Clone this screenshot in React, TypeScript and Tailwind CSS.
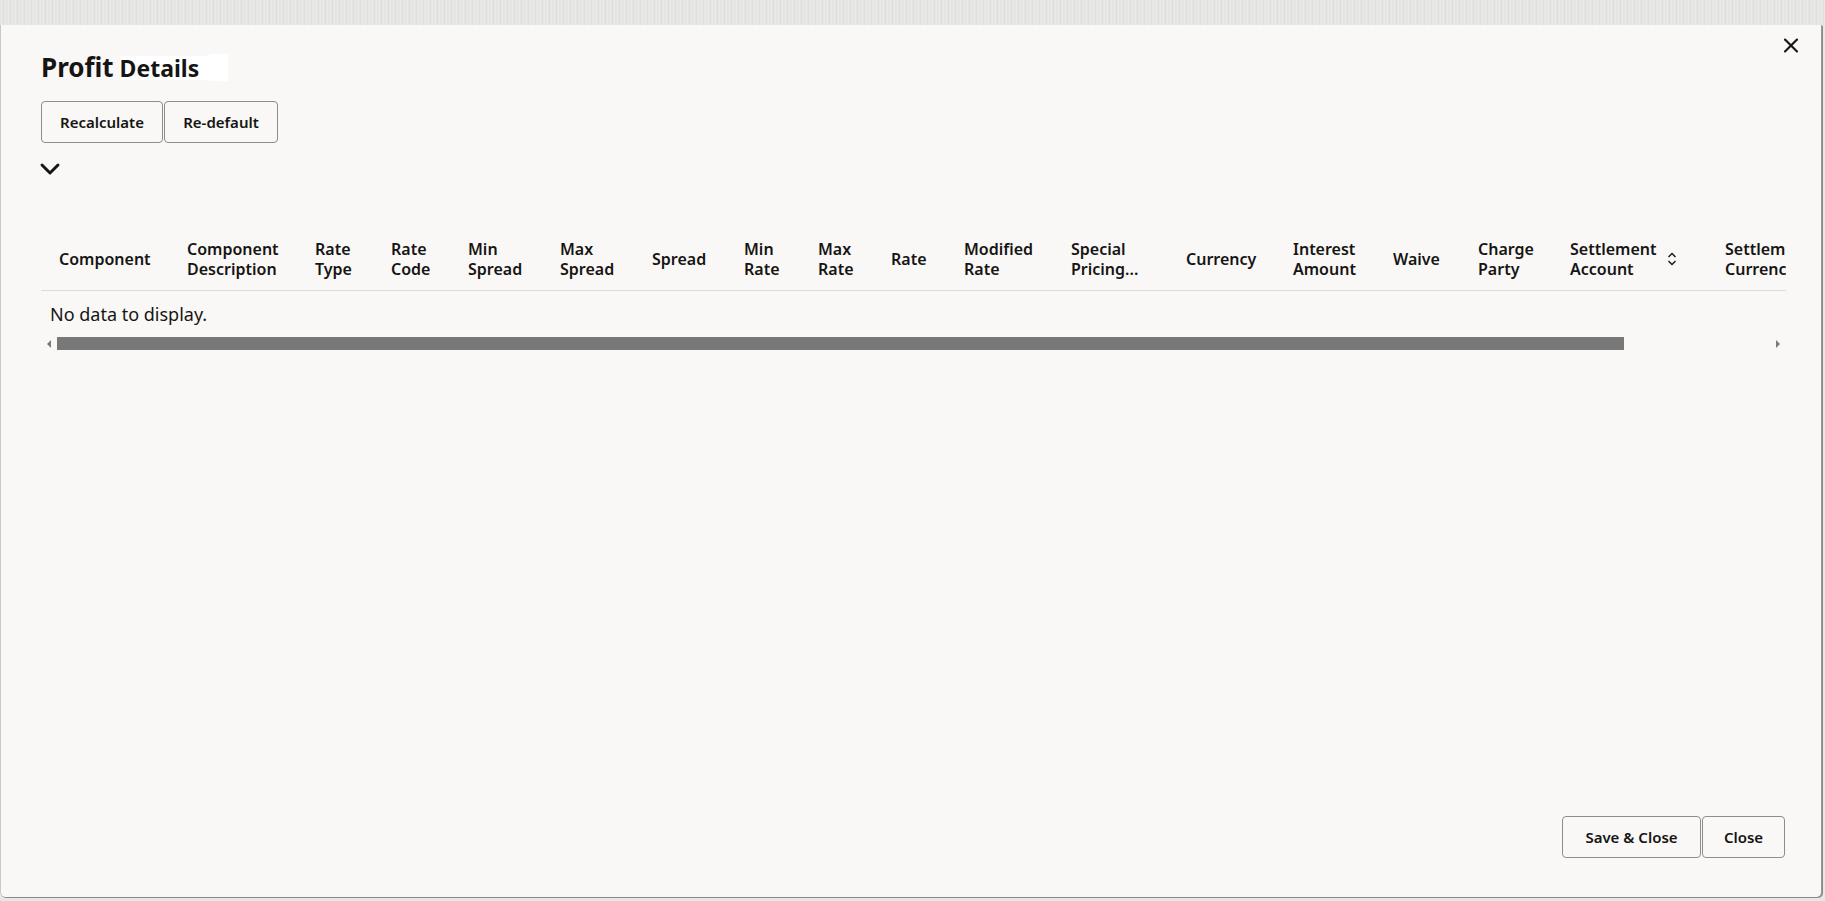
import { X, ChevronDown } from 'lucide-react'

const columns: { lines: string[]; w: string; sort?: boolean }[] = [
  { lines: ['Component'], w: 'w-[128px]' },
  { lines: ['Component', 'Description'], w: 'w-[128px]' },
  { lines: ['Rate', 'Type'], w: 'w-[76px]' },
  { lines: ['Rate', 'Code'], w: 'w-[77px]' },
  { lines: ['Min', 'Spread'], w: 'w-[92px]' },
  { lines: ['Max', 'Spread'], w: 'w-[92px]' },
  { lines: ['Spread'], w: 'w-[92px]' },
  { lines: ['Min', 'Rate'], w: 'w-[74px]' },
  { lines: ['Max', 'Rate'], w: 'w-[73px]' },
  { lines: ['Rate'], w: 'w-[73px]' },
  { lines: ['Modified', 'Rate'], w: 'w-[107px]' },
  { lines: ['Special', 'Pricing...'], w: 'w-[115px]' },
  { lines: ['Currency'], w: 'w-[107px]' },
  { lines: ['Interest', 'Amount'], w: 'w-[100px]' },
  { lines: ['Waive'], w: 'w-[85px]' },
  { lines: ['Charge', 'Party'], w: 'w-[92px]' },
  { lines: ['Settlement', 'Account'], w: 'w-[155px]', sort: true },
  { lines: ['Settlement', 'Currency'], w: 'w-[130px]' },
]

function SortIcon() {
  return (
    <svg width="10" height="14" viewBox="0 0 10 14" className="ml-[11px] shrink-0">
      <path d="M1.5 5 L5 1.5 L8.5 5" fill="none" stroke="#161513" strokeWidth="1.4" />
      <path d="M1.5 9 L5 12.5 L8.5 9" fill="none" stroke="#161513" strokeWidth="1.4" />
    </svg>
  )
}

export default function App() {
  return (
    <div
      className="w-[1825px] h-[901px] bg-[#e7e7e6] text-[#161513] overflow-hidden flex flex-col"
      style={{ fontFamily: '"Noto Sans", "Open Sans", sans-serif' }}
    >
      <div className="h-[25px] shrink-0 bg-[repeating-linear-gradient(90deg,#e0e0df_0px,#efefee_2px,#dadada_3px,#ebebea_5px,#e3e3e2_7px)]" />

      {/* Dialog */}
      <div className="w-[1822px] h-[872px] bg-[#f9f8f7] border-l border-[#c9c9c9] border-r border-r-[#9a9a9a] rounded-b-[5px] shadow-[1px_1px_0_#8a8a8a] flex flex-col pl-[40px] pr-[36px] pt-[26px] pb-[39px] relative">
        <button className="absolute right-[18px] top-[8px] w-[24px] h-[24px] flex items-center justify-center">
          <X size={25} strokeWidth={2.1} color="#161513" />
        </button>

        {/* Title */}
        <div className="flex items-center h-[32px]">
          <span className="text-[26px] font-bold leading-[32px]">Profit</span>
          <span className="text-[23px] font-bold leading-[24px] bg-white ml-[6px] pr-[10px] mt-[2px]">Details</span>
          <span className="w-[19px] h-[27px] bg-white" />
        </div>

        {/* Actions */}
        <div className="flex mt-[18px]">
          <button className="h-[42px] w-[122px] border border-[#8f8d8b] rounded-[4px] text-[15px] font-semibold bg-[#f9f8f7]">
            Recalculate
          </button>
          <button className="h-[42px] w-[114px] ml-[1px] border border-[#8f8d8b] rounded-[4px] text-[15px] font-semibold bg-[#f9f8f7]">
            Re-default
          </button>
        </div>

        <div className="mt-[17px] h-[18px] w-[18px] flex items-center justify-center overflow-visible">
          <ChevronDown size={32} strokeWidth={2.2} color="#161513" className="shrink-0" />
        </div>

        {/* Table */}
        <div className="mt-[48px] w-[1745px] overflow-hidden">
          <div className="flex h-[65px] items-center pt-[1px] border-b border-[#dedcda] w-[1745px]">
            {columns.map((c, i) => (
              <div key={i} className={`${c.w} shrink-0 pl-[18px] flex items-center`}>
                <div className="text-[16px] font-semibold leading-[20px] whitespace-nowrap">
                  {c.lines.map((l, j) => (
                    <div key={j}>{l}</div>
                  ))}
                </div>
                {c.sort && <SortIcon />}
              </div>
            ))}
          </div>
          <div className="pl-[9px] pt-[11px] h-[46px] text-[18px] leading-[24px]">No data to display.</div>

          {/* Scrollbar */}
          <div className="flex items-center h-[13px]">
            <div className="w-[16px] flex justify-center">
              <div className="w-0 h-0 border-y-[4px] border-y-transparent border-r-[4px] border-r-[#7a7a7a]" />
            </div>
            <div className="w-[1567px] h-[13px] bg-[#787878]" />
            <div className="flex-1" />
            <div className="w-0 h-0 border-y-[4px] border-y-transparent border-l-[4px] border-l-[#7a7a7a] mr-[6px]" />
          </div>
        </div>

        <div className="flex-1" />

        {/* Footer */}
        <div className="flex justify-end">
          <button className="h-[42px] w-[139px] border border-[#8f8d8b] rounded-[4px] text-[15px] font-semibold bg-[#f9f8f7]">
            Save &amp; Close
          </button>
          <button className="h-[42px] w-[83px] ml-[1px] border border-[#8f8d8b] rounded-[4px] text-[15px] font-semibold bg-[#f9f8f7]">
            Close
          </button>
        </div>
      </div>
    </div>
  )
}
